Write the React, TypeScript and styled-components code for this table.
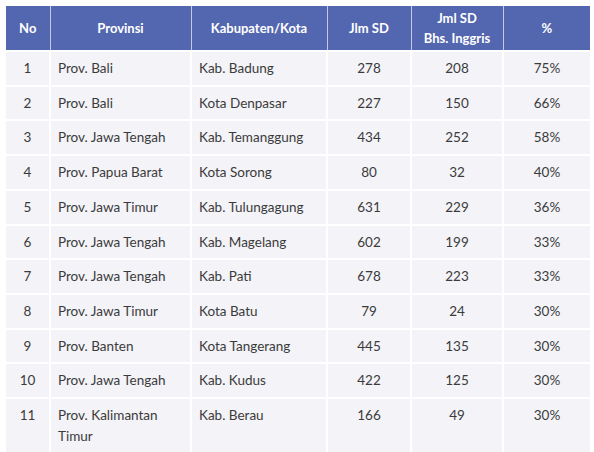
import styled, { createGlobalStyle } from 'styled-components'

type Row = {
  no: number
  provinsi: string
  kota: string
  jumlah: number
  inggris: number
  persen: string
}

const rows: Row[] = [
  { no: 1, provinsi: 'Prov. Bali', kota: 'Kab. Badung', jumlah: 278, inggris: 208, persen: '75%' },
  { no: 2, provinsi: 'Prov. Bali', kota: 'Kota Denpasar', jumlah: 227, inggris: 150, persen: '66%' },
  { no: 3, provinsi: 'Prov. Jawa Tengah', kota: 'Kab. Temanggung', jumlah: 434, inggris: 252, persen: '58%' },
  { no: 4, provinsi: 'Prov. Papua Barat', kota: 'Kota Sorong', jumlah: 80, inggris: 32, persen: '40%' },
  { no: 5, provinsi: 'Prov. Jawa Timur', kota: 'Kab. Tulungagung', jumlah: 631, inggris: 229, persen: '36%' },
  { no: 6, provinsi: 'Prov. Jawa Tengah', kota: 'Kab. Magelang', jumlah: 602, inggris: 199, persen: '33%' },
  { no: 7, provinsi: 'Prov. Jawa Tengah', kota: 'Kab. Pati', jumlah: 678, inggris: 223, persen: '33%' },
  { no: 8, provinsi: 'Prov. Jawa Timur', kota: 'Kota Batu', jumlah: 79, inggris: 24, persen: '30%' },
  { no: 9, provinsi: 'Prov. Banten', kota: 'Kota Tangerang', jumlah: 445, inggris: 135, persen: '30%' },
  { no: 10, provinsi: 'Prov. Jawa Tengah', kota: 'Kab. Kudus', jumlah: 422, inggris: 125, persen: '30%' },
  { no: 11, provinsi: 'Prov. Kalimantan Timur', kota: 'Kab. Berau', jumlah: 166, inggris: 49, persen: '30%' },
]

const columns = [44, 141, 136, 84, 92, 87]

function App() {
  return (
    <>
      <GlobalStyle />
      <Page>
        <Table>
          <colgroup>
            {columns.map((w, i) => <col key={i} style={{ width: w }} />)}
          </colgroup>
          <thead>
            <tr>
              <Th>No</Th>
              <Th>Provinsi</Th>
              <Th>Kabupaten/Kota</Th>
              <Th>Jlm SD</Th>
              <Th>Jml SD<br />Bhs. Inggris</Th>
              <Th>%</Th>
            </tr>
          </thead>
          <tbody>
            {rows.map((row) => (
              <tr key={row.no}>
                <Td $center>{row.no}</Td>
                <Td>{row.provinsi}</Td>
                <Td>{row.kota}</Td>
                <Td $center>{row.jumlah}</Td>
                <Td $center>{row.inggris}</Td>
                <Td $center>{row.persen}</Td>
              </tr>
            ))}
          </tbody>
        </Table>
      </Page>
    </>
  )
}

const GlobalStyle = createGlobalStyle`
  body {
    margin: 0;
    background: #ffffff;
    font-family: Lato, "Open Sans", sans-serif;
  }
`

const Page = styled.div`
  padding: 6px;
`

const Table = styled.table`
  width: 584px;
  table-layout: fixed;
  border-collapse: collapse;
`

const Th = styled.th`
  background: #5367b0;
  color: #ffffff;
  font-size: 13px;
  font-weight: 700;
  line-height: 20px;
  height: 44px;
  padding: 0 6px;
  text-align: center;
  vertical-align: middle;
  border-left: 1px solid #c4cae5;
  border-right: 1px solid #c4cae5;
  border-bottom: 2px solid #ffffff;

  &:first-child {
    border-left: none;
  }
  &:last-child {
    border-right: none;
  }
`

const Td = styled.td<{ $center?: boolean }>`
  background: #f3f3f8;
  color: #3b3b3b;
  font-size: 13.5px;
  line-height: 20.7px;
  padding: 6px 7px;
  vertical-align: top;
  text-align: ${p => (p.$center ? 'center' : 'left')};
  border: 2px solid #ffffff;

  &:first-child {
    border-left: none;
  }
  &:last-child {
    border-right: none;
  }
`

export default App
